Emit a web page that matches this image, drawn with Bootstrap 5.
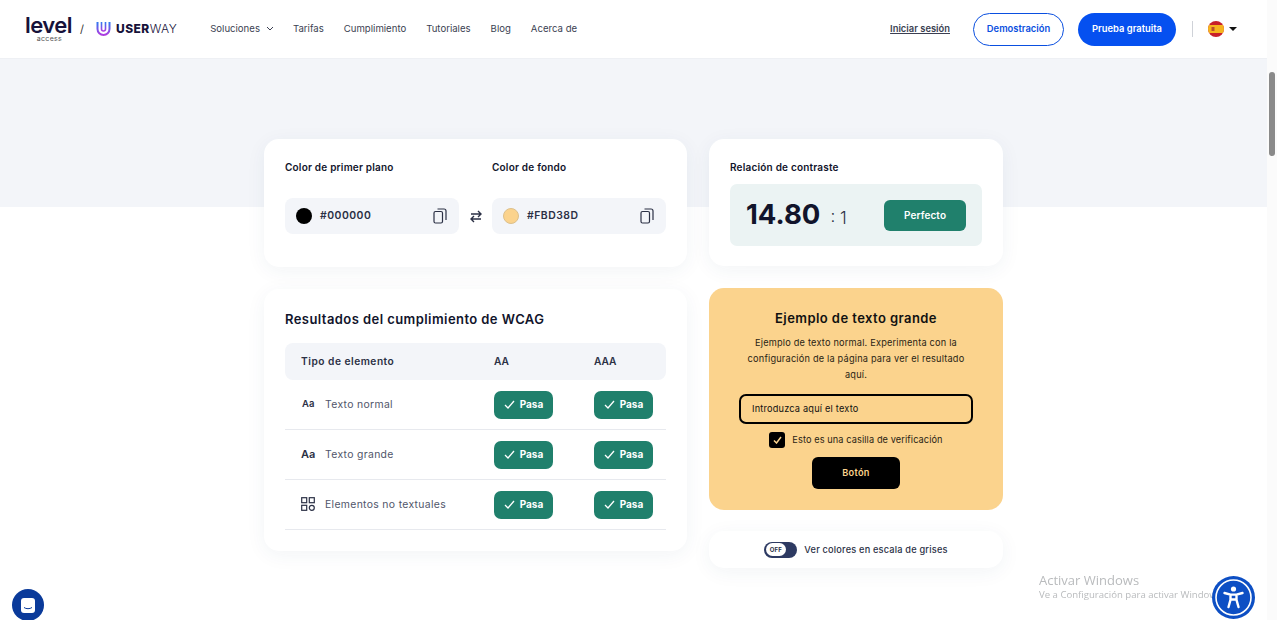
<!DOCTYPE html>
<html lang="es">
<head>
    <meta charset="UTF-8">
    <meta name="viewport" content="width=device-width, initial-scale=1.0">
    <title>Comprobador de contraste</title>
    <link href="https://cdn.jsdelivr.net/npm/bootstrap@5.3.0/dist/css/bootstrap.min.css" rel="stylesheet">
    <style>
        html, body { height: 620px; overflow: hidden; }
        body { font-family: Inter, "Liberation Sans", sans-serif; color: #11142b; background: #fff; }
        .page-area { width: 1267px; height: 620px; }
        .scroll-rail { width: 10px; height: 620px; background: #fbfbfb; }
        .scroll-thumb { width: 6px; height: 84px; margin: 72px auto 0; border-radius: 3px; background: #8a8a8a; }

        .top-bar { height: 59px; padding: 0 30px 0 25px; background: #fff; border-bottom: 1px solid #eef0f4; }
        .logo-block { width: 47px; }
        .logo-level { font-size: 22px; font-weight: 600; letter-spacing: -.5px; line-height: 16px; color: #17123a; }
        .logo-access { margin-top: 3px; padding-right: 10px; font-size: 7px; line-height: 6px; color: #555; text-align: right; letter-spacing: .3px; }
        .logo-slash { margin: 0 12px 0 8px; font-size: 11px; color: #333; }
        .logo-user { margin-left: 5px; font-size: 12px; font-weight: 800; letter-spacing: .45px; color: #17123a; }
        .logo-user span { font-weight: 300; }
        .menu-links { margin-left: 33px; gap: 20px; font-size: 9.6px; color: #3b3f52; }
        .menu-drop { gap: 6px; margin-right: -1px; }
        .login-link { font-size: 9.4px; font-weight: 600; color: #3b3f52; text-decoration: underline; margin-right: 23px; }
        .pill-outline, .pill-solid { height: 33px; border-radius: 17px; font-size: 9.4px; font-weight: 600; padding: 0; }
        .pill-outline { width: 91px; border: 1.5px solid #0a4fe0; color: #0a4fe0; background: #fff; margin-right: 14px; }
        .pill-solid { width: 98px; background: #0550f0; color: #fff; border: 0; }
        .bar-divider { width: 1px; height: 16px; background: #cfd2d8; margin: 0 15px 0 16px; }
        .caret-down { width: 0; height: 0; margin-left: 5px; border-left: 4px solid transparent; border-right: 4px solid transparent; border-top: 4px solid #111; }

        .hero-band { height: 148px; background: #f3f5f9; }
        .main-wrap { margin-top: -68px; gap: 22px; }
        .col-left { width: 423px; gap: 22px; }
        .col-right { width: 294px; }
        .white-box { background: #fff; border-radius: 15px; box-shadow: 0 4px 20px rgba(40, 60, 110, .06); }
        .colors-box { height: 128px; padding: 22px 21px 0; }
        .ratio-box { height: 127px; padding: 22px 21px 0; margin-bottom: 22px; }
        .box-label { font-size: 10px; font-weight: 600; line-height: 13px; letter-spacing: .2px; color: #11142b; }
        .color-field { width: 174px; height: 36px; padding: 0 12px 0 11px; border-radius: 8px; background: #f3f5f9; font-size: 10.4px; font-weight: 600; letter-spacing: .5px; color: #2b3045; }
        .color-dot { width: 16px; height: 16px; border-radius: 50%; margin-right: 8px; }
        .swap-gap { width: 33px; }
        .ratio-panel { height: 62px; margin-top: 10px; padding: 0 16px 0 16px; border-radius: 7px; background: #ebf3f3; }
        .ratio-num { font-size: 27.5px; font-weight: 700; line-height: 1; color: #11142b; }
        .ratio-one { margin-left: 10px; font-size: 17px; font-weight: 300; color: #2b3045; }
        .tag-perfect { width: 82px; height: 31px; border-radius: 6px; background: #20806c; color: #fff; font-size: 10px; font-weight: 600; letter-spacing: .1px; }

        .results-box { height: 262px; padding: 22px 21px 0; }
        .results-title { margin: 0 0 16px; font-size: 13px; font-weight: 600; line-height: 16px; letter-spacing: .43px; color: #11142b; }
        .res-head { height: 37px; border-radius: 8px; background: #f3f5f9; font-size: 10.2px; font-weight: 600; color: #2b3045; }
        .head-name { letter-spacing: .5px; }
        .res-row { height: 50px; border-bottom: 1px solid #e7e9ee; font-size: 10.4px; letter-spacing: .33px; color: #50556a; }
        .cell-name { width: 209px; padding-left: 16px; }
        .cell-aa { width: 100px; }
        .res-icon { width: 24px; color: #2b3045; font-weight: 600; letter-spacing: 0; }
        .aa-small { font-size: 9.5px; padding-left: 1px; }
        .aa-large { font-size: 11px; }
        .pass-tag { width: 59px; height: 28px; border-radius: 7px; background: #20806c; color: #fff; font-size: 10px; font-weight: 700; letter-spacing: 0; gap: 5px; }

        .sample-box { height: 222px; padding: 21px 30px 0; border-radius: 15px; background: #fbd38d; color: #111; text-align: center; }
        .sample-title { margin: 0 0 8px; font-size: 13px; font-weight: 600; line-height: 18px; letter-spacing: .43px; }
        .sample-text { margin: 0 0 11px; padding: 0 7px; font-size: 9.2px; line-height: 16px; letter-spacing: .2px; color: #2a2414; }
        .sample-input { height: 30px; padding: 0 11px; border: 2px solid #000; border-radius: 7px; background: transparent; font-size: 9.2px; letter-spacing: .2px; text-align: left; }
        .check-line { margin-top: 8px; gap: 7px; font-size: 9.2px; letter-spacing: .1px; color: #2a2414; }
        .check-box { width: 16px; height: 16px; border-radius: 3px; background: #000; }
        .sample-btn { width: 88px; height: 32px; margin-top: 9px; border: 0; border-radius: 6px; background: #000; color: #fbd38d; font-size: 9.2px; font-weight: 600; letter-spacing: .3px; }
        .gray-box { height: 37px; margin-top: 21px; gap: 7px; font-size: 9.2px; font-weight: 500; letter-spacing: .2px; color: #2b3045; }
        .toggle-off { width: 33px; height: 16px; padding: 1.5px; border-radius: 8px; background: #2d3a62; }
        .toggle-knob { width: 20px; height: 13px; border-radius: 7px; background: #fff; font-size: 6px; font-weight: 700; line-height: 13px; text-align: center; color: #2b3045; }

        .chat-bubble { left: 12px; bottom: -1px; width: 32px; height: 32px; border-radius: 50%; background: #0a3a9a; }
        .activate-note { left: 1039px; top: 573px; color: #b9bbbd; font-size: 13px; line-height: 14px; font-family: "Open Sans", "Liberation Sans", sans-serif; white-space: nowrap; }
        .activate-note small { display: block; font-size: 9.6px; line-height: 15px; }
        .access-btn { left: 1212px; top: 576px; width: 43px; height: 43px; border-radius: 50%; background: #0d4fc4; }
    </style>
</head>
<body>
<div class="d-flex">
    <div class="page-area">
        <!-- top navigation -->
        <header class="top-bar d-flex align-items-center">
            <div class="d-flex align-items-center">
                <div class="logo-block">
                    <div class="logo-level">level</div>
                    <div class="logo-access">access</div>
                </div>
                <span class="logo-slash">/</span>
                <svg width="15" height="16" viewBox="0 0 15 16" fill="none">
                    <defs><linearGradient id="uGrad" x1="0" y1="0" x2="0" y2="1"><stop offset="0" stop-color="#2d7bf0"/><stop offset="1" stop-color="#b03be0"/></linearGradient></defs>
                    <path d="M1.5 1v7a6 6 0 0 0 12 0V1" stroke="url(#uGrad)" stroke-width="2"/>
                    <path d="M5.5 1v7a2 2 0 0 0 4 0V1" stroke="url(#uGrad)" stroke-width="1.6"/>
                </svg>
                <span class="logo-user">USER<span>WAY</span></span>
            </div>
            <nav class="menu-links d-flex align-items-center">
                <span class="menu-drop d-flex align-items-center">Soluciones
                    <svg width="8" height="5" viewBox="0 0 8 5" fill="none"><path d="M1 1l3 3 3-3" stroke="#3b3f52"/></svg>
                </span>
                <span>Tarifas</span>
                <span>Cumplimiento</span>
                <span>Tutoriales</span>
                <span>Blog</span>
                <span>Acerca de</span>
            </nav>
            <div class="ms-auto d-flex align-items-center">
                <a class="login-link" href="#">Iniciar sesión</a>
                <button class="pill-outline" type="button">Demostración</button>
                <button class="pill-solid" type="button">Prueba gratuita</button>
                <span class="bar-divider"></span>
                <svg width="16" height="16" viewBox="0 0 16 16">
                    <defs><clipPath id="flagClip"><circle cx="8" cy="8" r="8"/></clipPath></defs>
                    <g clip-path="url(#flagClip)">
                        <rect width="16" height="16" fill="#c8202a"/>
                        <rect y="4" width="16" height="8" fill="#f6b51e"/>
                        <rect x="3.5" y="6" width="3" height="4" fill="#b9502a"/>
                    </g>
                </svg>
                <span class="caret-down"></span>
            </div>
        </header>

        <div class="hero-band"></div>

        <main class="main-wrap d-flex justify-content-center">
            <div class="col-left d-flex flex-column">
                <section class="white-box colors-box">
                    <div class="d-flex">
                        <div class="box-label" style="width: 207px">Color de primer plano</div>
                        <div class="box-label">Color de fondo</div>
                    </div>
                    <div class="d-flex align-items-center" style="margin-top: 24px">
                        <div class="color-field d-flex align-items-center">
                            <span class="color-dot" style="background: #000"></span>#000000
                            <svg class="ms-auto" width="14" height="16" viewBox="0 0 14 16" fill="none" stroke="#2b3045" stroke-width="1.2"><rect x="1" y="3.5" width="8.5" height="11.5" rx="1.5"/><path d="M4.5 1h6.5a2 2 0 0 1 2 2v9"/></svg>
                        </div>
                        <div class="swap-gap d-flex justify-content-center">
                            <svg width="12" height="13" viewBox="0 0 12 13" fill="none" stroke="#2b3045" stroke-width="1.4"><path d="M1 4h10M8 1l3 3-3 3M11 9H1M4 6l-3 3 3 3"/></svg>
                        </div>
                        <div class="color-field d-flex align-items-center">
                            <span class="color-dot" style="background: #fbd38d; border: 1px solid #dcc08c"></span>#FBD38D
                            <svg class="ms-auto" width="14" height="16" viewBox="0 0 14 16" fill="none" stroke="#2b3045" stroke-width="1.2"><rect x="1" y="3.5" width="8.5" height="11.5" rx="1.5"/><path d="M4.5 1h6.5a2 2 0 0 1 2 2v9"/></svg>
                        </div>
                    </div>
                </section>

                <section class="white-box results-box">
                    <h2 class="results-title">Resultados del cumplimiento de WCAG</h2>
                    <div class="res-head d-flex align-items-center">
                        <div class="cell-name head-name">Tipo de elemento</div>
                        <div class="cell-aa">AA</div>
                        <div>AAA</div>
                    </div>
                    <div class="res-row d-flex align-items-center">
                        <div class="cell-name d-flex align-items-center"><span class="res-icon aa-small">Aa</span>Texto normal</div>
                        <div class="cell-aa"><span class="pass-tag d-flex align-items-center justify-content-center"><svg width="11" height="9" viewBox="0 0 11 9" fill="none" stroke="#fff" stroke-width="1.3"><path d="M1 5l3 3 6-7"/></svg>Pasa</span></div>
                        <div><span class="pass-tag d-flex align-items-center justify-content-center"><svg width="11" height="9" viewBox="0 0 11 9" fill="none" stroke="#fff" stroke-width="1.3"><path d="M1 5l3 3 6-7"/></svg>Pasa</span></div>
                    </div>
                    <div class="res-row d-flex align-items-center">
                        <div class="cell-name d-flex align-items-center"><span class="res-icon aa-large">Aa</span>Texto grande</div>
                        <div class="cell-aa"><span class="pass-tag d-flex align-items-center justify-content-center"><svg width="11" height="9" viewBox="0 0 11 9" fill="none" stroke="#fff" stroke-width="1.3"><path d="M1 5l3 3 6-7"/></svg>Pasa</span></div>
                        <div><span class="pass-tag d-flex align-items-center justify-content-center"><svg width="11" height="9" viewBox="0 0 11 9" fill="none" stroke="#fff" stroke-width="1.3"><path d="M1 5l3 3 6-7"/></svg>Pasa</span></div>
                    </div>
                    <div class="res-row d-flex align-items-center">
                        <div class="cell-name d-flex align-items-center"><span class="res-icon d-flex"><svg width="14" height="14" viewBox="0 0 14 14" fill="none" stroke="#2b3045" stroke-width="1.2"><rect x=".7" y=".7" width="5" height="5"/><rect x="8.3" y=".7" width="5" height="5"/><rect x=".7" y="8.3" width="5" height="5"/><circle cx="10.8" cy="10.8" r="2.5"/></svg></span>Elementos no textuales</div>
                        <div class="cell-aa"><span class="pass-tag d-flex align-items-center justify-content-center"><svg width="11" height="9" viewBox="0 0 11 9" fill="none" stroke="#fff" stroke-width="1.3"><path d="M1 5l3 3 6-7"/></svg>Pasa</span></div>
                        <div><span class="pass-tag d-flex align-items-center justify-content-center"><svg width="11" height="9" viewBox="0 0 11 9" fill="none" stroke="#fff" stroke-width="1.3"><path d="M1 5l3 3 6-7"/></svg>Pasa</span></div>
                    </div>
                </section>
            </div>

            <div class="col-right">
                <section class="white-box ratio-box">
                    <div class="box-label">Relación de contraste</div>
                    <div class="ratio-panel d-flex align-items-center justify-content-between">
                        <div class="ratio-num">14.80<span class="ratio-one">: 1</span></div>
                        <div class="tag-perfect d-flex align-items-center justify-content-center">Perfecto</div>
                    </div>
                </section>

                <section class="sample-box">
                    <h3 class="sample-title">Ejemplo de texto grande</h3>
                    <p class="sample-text">Ejemplo de texto normal. Experimenta con la configuración de la página para ver el resultado aquí.</p>
                    <div class="sample-input d-flex align-items-center">Introduzca aquí el texto</div>
                    <div class="check-line d-flex align-items-center justify-content-center">
                        <span class="check-box d-flex align-items-center justify-content-center"><svg width="9" height="8" viewBox="0 0 9 8" fill="none" stroke="#fbd38d" stroke-width="1.5"><path d="M1 4.5L3.5 7 8 1"/></svg></span>
                        Esto es una casilla de verificación
                    </div>
                    <button class="sample-btn" type="button">Botón</button>
                </section>

                <div class="white-box gray-box d-flex align-items-center justify-content-center">
                    <span class="toggle-off"><span class="toggle-knob d-block">OFF</span></span>
                    Ver colores en escala de grises
                </div>
            </div>
        </main>
    </div>
    <div class="scroll-rail"><div class="scroll-thumb"></div></div>
</div>

<!-- floating widgets -->
<div class="chat-bubble position-fixed d-flex align-items-center justify-content-center">
    <svg width="14" height="15" viewBox="0 0 14 15"><rect width="14" height="15" rx="3" fill="#fff"/><path d="M3 9.5c2 1.6 6 1.6 8 0" fill="none" stroke="#0a3a9a" stroke-width="1"/></svg>
</div>
<div class="activate-note position-fixed">Activar Windows<small>Ve a Configuración para activar Windows.</small></div>
<div class="access-btn position-fixed d-flex align-items-center justify-content-center">
    <svg width="37" height="37" viewBox="0 0 37 37" fill="none">
        <circle cx="18.5" cy="18.5" r="17.5" stroke="#fff" stroke-width="1.6"/>
        <circle cx="18.5" cy="10" r="2.6" fill="#fff"/>
        <path d="M9.5 14l6 1.6v5.2L13.5 28M27.5 14l-6 1.6v5.2L23.5 28M15.5 15.6h6M15.5 20.5h6" stroke="#fff" stroke-width="2.4" stroke-linecap="round"/>
    </svg>
</div>
</body>
</html>
